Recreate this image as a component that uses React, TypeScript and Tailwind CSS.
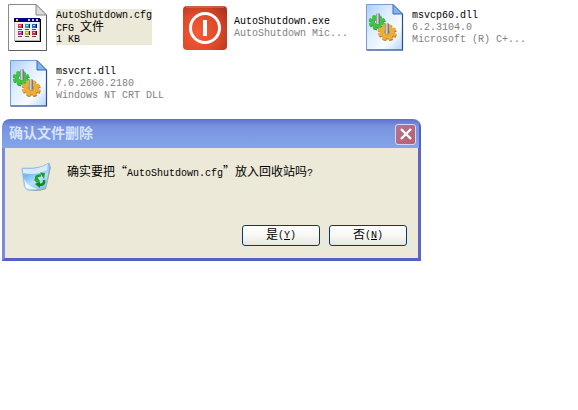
import React from "react"

type IconKind = "cfg" | "exe" | "dll"

interface FileItem {
  name: string
  kind: IconKind
  details: React.ReactNode[]
  selected?: boolean
}

const FILES: FileItem[] = [
  {
    name: "AutoShutdown.cfg",
    kind: "cfg",
    details: [
      <>
        CFG <span className="text-xs leading-3.5">文件</span>
      </>,
      "1 KB",
    ],
    selected: true,
  },
  { name: "AutoShutdown.exe", kind: "exe", details: ["AutoShutdown Mic..."] },
  {
    name: "msvcp60.dll",
    kind: "dll",
    details: ["6.2.3104.0", "Microsoft (R) C+..."],
  },
  {
    name: "msvcrt.dll",
    kind: "dll",
    details: ["7.0.2600.2180", "Windows NT CRT DLL"],
  },
]

const CFG_CELLS = [
  { x: 14, y: 21, color: "#e03050" },
  { x: 21, y: 21, color: "#18a8b8" },
  { x: 28, y: 21, color: "#2068d8" },
  { x: 14, y: 28, color: "#e818b8" },
  { x: 21, y: 28, color: "#c8b018" },
  { x: 28, y: 28, color: "#e81840" },
]

const CfgIcon: React.FC = () => (
  <svg viewBox="0 0 48 48" className="size-12 shrink-0" aria-hidden="true">
    <path d="M4.5 1.5H32L42.5 12V47.5H4.5Z" fill="#fdfdfd" stroke="#8a8a8a" />
    <path d="M42.5 12V47.5H4.5" fill="none" stroke="#606060" />
    <path d="M32 1.5V12H42.5Z" fill="#dcdcdc" stroke="#858585" />
    <path d="M11 16H37V39H11Z" fill="#000" />
    <path d="M10 15H36V38H10Z" fill="#b8b8b8" />
    <path d="M11 19H35V37H11Z" fill="#f0f0ea" />
    <path d="M10 15H36V19H10Z" fill="#00007c" />
    <path d="M12 16H14V18H12Z" fill="#f0d820" />
    <path d="M24 16H26V18H24ZM28 16H30V18H28ZM32 16H34V18H32Z" fill="#d0d0d0" />
    {CFG_CELLS.map(({ x, y, color }) => (
      <g key={`${x}-${y}`}>
        <rect x={x + 1} y={y} width="4" height="4" fill="#201830" />
        <rect x={x} y={y} width="4" height="4" fill={color} />
        <rect x={x + 1} y={y + 1} width="2" height="1" fill="#fff" opacity="0.7" />
        <rect x={x} y={y + 5} width="4" height="1" fill="#505050" />
      </g>
    ))}
  </svg>
)

const ExeIcon: React.FC = () => (
  <svg viewBox="0 0 48 48" className="size-12 shrink-0" aria-hidden="true">
    <defs>
      <radialGradient id="power" cx="0.35" cy="0.62" r="0.8">
        <stop offset="0" stopColor="#f25c36" />
        <stop offset="0.55" stopColor="#e04a2a" />
        <stop offset="1" stopColor="#b03420" />
      </radialGradient>
    </defs>
    <rect x="1" y="3" width="44" height="44" rx="4" fill="url(#power)" />
    <path d="M4 4H42" stroke="#d8806c" />
    <circle cx="23" cy="25" r="14.5" fill="none" stroke="#fff" strokeWidth="3" />
    <rect x="21" y="17" width="4" height="16" fill="#fff" />
  </svg>
)

interface GearProps {
  cx: number
  cy: number
  r: number
  fill: string
  edge: string
}

const Gear: React.FC<GearProps> = ({ cx, cy, r, fill, edge }) => (
  <g transform={`translate(${cx} ${cy}) rotate(8) scale(1 0.85)`}>
    <g transform="translate(0.6 1.2)">
      <circle r={r - 1.5} fill={edge} />
      <circle r={r - 0.8} pathLength="32" fill="none" stroke={edge} strokeWidth="2.6" strokeDasharray="2.4 1.6" />
    </g>
    <circle r={r - 1.5} fill={fill} />
    <circle r={r - 0.8} pathLength="32" fill="none" stroke={fill} strokeWidth="2.6" strokeDasharray="2.4 1.6" />
    <circle r="2.6" fill="#d8e8fa" stroke={edge} strokeWidth="0.8" />
  </g>
)

const DllIcon: React.FC = () => (
  <svg viewBox="0 0 48 48" className="size-12 shrink-0" aria-hidden="true">
    <defs>
      <linearGradient id="page" x1="0" y1="0" x2="1" y2="1">
        <stop offset="0" stopColor="#a9cdf9" />
        <stop offset="0.35" stopColor="#dcecff" />
        <stop offset="0.7" stopColor="#f8fcff" />
        <stop offset="1" stopColor="#b4d4fb" />
      </linearGradient>
      <linearGradient id="pin">
        <stop offset="0" stopColor="#7c848c" />
        <stop offset="0.4" stopColor="#d0d6da" />
        <stop offset="1" stopColor="#5c646c" />
      </linearGradient>
    </defs>
    <path d="M6.5 1.5H33L42.5 11V47H6.5Z" fill="url(#page)" stroke="#7c9cd8" />
    <path d="M42.5 11V47H6.5" fill="none" stroke="#2c4c90" strokeWidth="1.2" />
    <path d="M33 1.5V11H42.5Z" fill="#7fb4f5" stroke="#3c66b4" />
    <Gear cx={17} cy={19} r={8} fill="#3fc444" edge="#239a30" />
    <Gear cx={27} cy={29} r={9} fill="#f0ac38" edge="#b87c24" />
    <rect x="16" y="10" width="4" height="11" rx="1.5" fill="url(#pin)" />
    <rect x="25" y="20" width="4" height="11" rx="1.5" fill="url(#pin)" />
  </svg>
)

const RecycleBinIcon: React.FC = () => (
  <svg viewBox="0 0 32 32" className="size-8 shrink-0" aria-hidden="true">
    <defs>
      <linearGradient id="bin" x1="0" y1="0" x2="0.6" y2="1">
        <stop offset="0" stopColor="#b8e0fa" />
        <stop offset="0.4" stopColor="#74b8f2" />
        <stop offset="0.7" stopColor="#b8defc" />
        <stop offset="1" stopColor="#90c4f0" />
      </linearGradient>
    </defs>
    <path d="M7 28Q16 32 26 28L31 6L29 5Z" fill="#7c7c74" opacity="0.7" />
    <path d="M2 9Q1 7 4 7Q19 8 27 3Q30 1 30 4L26 26Q25 28 17 29Q8 30 6 28Q4 26 4 23Z" fill="url(#bin)" stroke="#8cb4d8" strokeWidth="0.6" />
    <path d="M3 8Q18 9 28 3L27 9Q15 15 3 12Z" fill="#e8f6ff" opacity="0.8" />
    <path d="M4 18Q8 26 18 28Q9 29 6 27Z" fill="#fff" opacity="0.8" />
    <path d="M16 18Q16 14 21 14.5" fill="none" stroke="#18a024" strokeWidth="2.6" />
    <path d="M20 11.5L25 12L24 18Z" fill="#18a024" />
    <path d="M24 19Q25 24 19 24" fill="none" stroke="#0c8c1c" strokeWidth="2.6" />
    <path d="M20 20.5L15 23L20 27Z" fill="#0c8c1c" />
    <path d="M14 19L17 16L20 20L17 22Z" fill="#20ac2c" />
  </svg>
)

const ICONS: Record<IconKind, React.FC> = {
  cfg: CfgIcon,
  exe: ExeIcon,
  dll: DllIcon,
}

const FileTile: React.FC<{ file: FileItem }> = ({ file }) => {
  const Icon = ICONS[file.kind]

  return (
    <li className="flex h-[54px] items-center gap-1">
      <Icon />
      <div
        className={
          file.selected
            ? "bg-[#ece9d8] text-black"
            : "text-[#808080]"
        }
      >
        <p className="h-3 whitespace-nowrap text-black">{file.name}</p>
        {file.details.map((detail, i) => (
          <p key={i} className="h-3 whitespace-nowrap">
            {detail}
          </p>
        ))}
      </div>
    </li>
  )
}

interface DialogButtonProps {
  label: string
  accessKey: string
}

const DialogButton: React.FC<DialogButtonProps> = ({ label, accessKey }) => (
  <button
    type="button"
    accessKey={accessKey}
    className="flex h-[21px] w-[78px] items-center justify-center rounded-[3px] border border-[#003c74] bg-linear-to-b from-white via-[#f7f7f3] to-[#e8e6de]"
  >
    <span className="text-xs">{label}</span>
    <span>
      (<u>{accessKey}</u>)
    </span>
  </button>
)

const ConfirmDialog: React.FC = () => (
  <section
    role="dialog"
    aria-labelledby="dialog-title"
    className="w-full max-w-[419px] overflow-hidden rounded-t-lg"
  >
    <header className="flex h-[29px] items-center justify-between border-r-2 border-r-[#5560c6] bg-linear-to-b from-[#5c72cf] via-[#7a93df] via-25% to-[#83a5e9] pt-px pr-[3px] pl-[7px]">
      <h1 id="dialog-title" className="text-sm font-bold text-[#d6e3fa]">
        确认文件删除
      </h1>
      <button
        type="button"
        aria-label="关闭"
        className="flex size-[21px] items-center justify-center rounded-[3px] border border-[#d5d7f2] bg-linear-to-br from-[#b5748f] to-[#b85f70]"
      >
        <svg viewBox="0 0 12 12" className="size-3" aria-hidden="true">
          <path d="M1 1L11 11M11 1L1 11" stroke="#fff" strokeWidth="2.4" />
        </svg>
      </button>
    </header>
    <div className="border-x-[3px] border-b-[3px] border-r-[#5c66c8] border-b-[#5660c4] border-l-[#778be0] bg-[#ece9d8] pt-[13px] pr-[11px] pb-3 pl-[15px]">
      <div className="flex items-start gap-[15px]">
        <RecycleBinIcon />
        <p className="font-['Noto_Sans_CJK_SC',sans-serif] text-xs leading-5">
          确实要把“
          <span className="font-['Liberation_Mono',monospace] text-[10px]">
            AutoShutdown.cfg
          </span>
          ”放入回收站吗
          <span className="font-['Liberation_Mono',monospace] text-[10px]">?</span>
        </p>
      </div>
      <div className="mt-8 flex justify-end gap-[9px]">
        <DialogButton label="是" accessKey="Y" />
        <DialogButton label="否" accessKey="N" />
      </div>
    </div>
  </section>
)

const App: React.FC = () => (
  <main
    lang="zh-CN"
    className="min-h-screen bg-white font-['Liberation_Mono','Noto_Sans_CJK_SC',monospace] text-[10px] leading-3.5 text-black"
  >
    <ul className="grid grid-cols-[repeat(auto-fill,178px)] gap-y-0.5 pl-1">
      {FILES.map((file) => (
        <FileTile key={file.name} file={file} />
      ))}
    </ul>
    <div className="px-0.5 pt-[9px]">
      <ConfirmDialog />
    </div>
  </main>
)

export default App
